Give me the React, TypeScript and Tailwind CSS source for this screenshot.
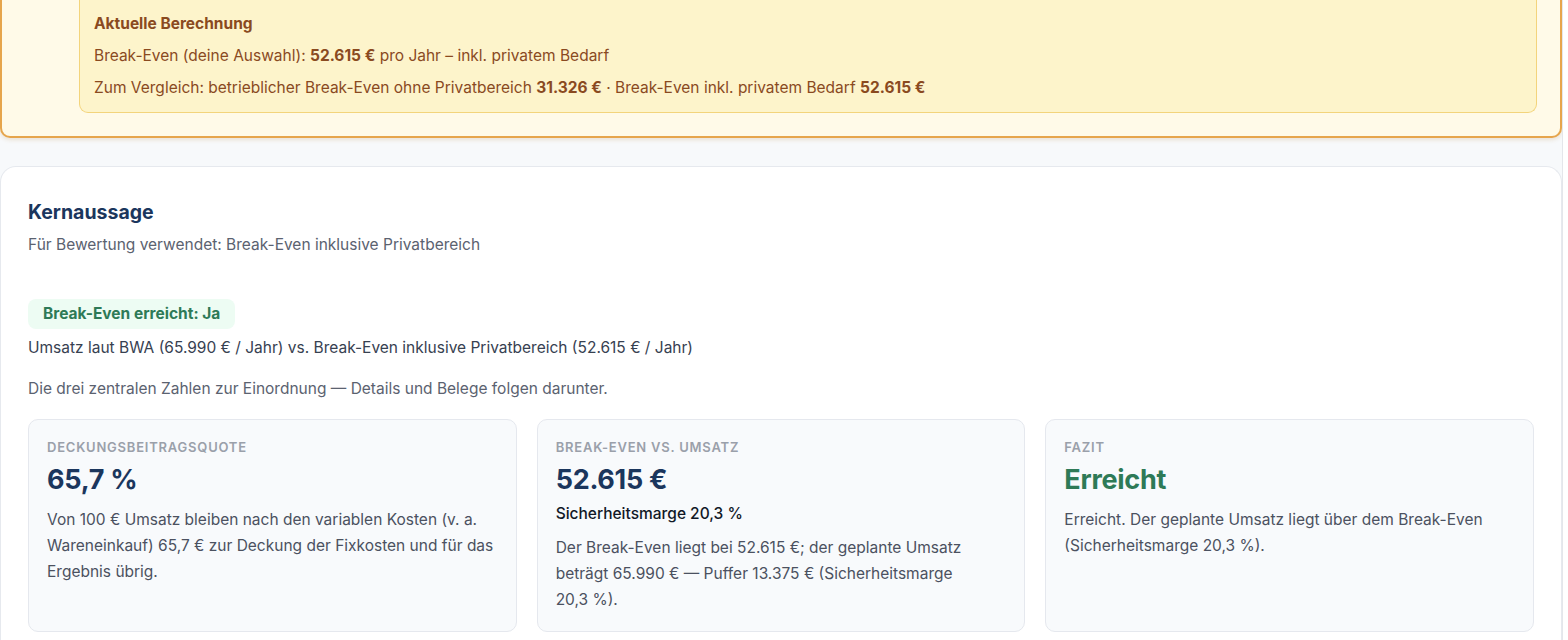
import React from "react";

const font = { fontFamily: "Inter, 'Noto Sans', sans-serif" };

type Kpi = {
  label: string;
  value: string;
  valueClass: string;
  sub?: string;
  text: string;
};

const kpis: Kpi[] = [
  {
    label: "Deckungsbeitragsquote",
    value: "65,7\u00a0%",
    valueClass: "text-[#1b365d]",
    text: "Von 100\u00a0€ Umsatz bleiben nach den variablen Kosten (v. a. Wareneinkauf) 65,7\u00a0€ zur Deckung der Fixkosten und für das Ergebnis übrig.",
  },
  {
    label: "Break-Even vs. Umsatz",
    value: "52.615\u00a0€",
    valueClass: "text-[#1b365d]",
    sub: "Sicherheitsmarge 20,3\u00a0%",
    text: "Der Break-Even liegt bei 52.615\u00a0€; der geplante Umsatz beträgt 65.990\u00a0€ — Puffer 13.375\u00a0€ (Sicherheitsmarge 20,3\u00a0%).",
  },
  {
    label: "Fazit",
    value: "Erreicht",
    valueClass: "text-[#2e7a57]",
    text: "Erreicht. Der geplante Umsatz liegt über dem Break-Even (Sicherheitsmarge 20,3\u00a0%).",
  },
];

function KpiCard({ k }: { k: Kpi }) {
  return (
    <div className="rounded-[10px] border border-[#e5e8ee] bg-[#f8fafc] px-[18px] pt-[19px] pb-[18px]">
      <div className="text-[13px] leading-[16px] font-semibold uppercase tracking-[0.06em] text-[#9aa0aa]">
        {k.label}
      </div>
      <div className={`mt-[8px] text-[27px] leading-[34px] font-bold tracking-[-0.01em] ${k.valueClass}`}>
        {k.value}
      </div>
      {k.sub && (
        <div className="mt-[6px] text-[15.5px] leading-[22px] font-medium text-[#111827]">{k.sub}</div>
      )}
      <p className="mt-[10px] pr-[4px] text-[15.5px] leading-[26px] text-[#4b5160]">{k.text}</p>
    </div>
  );
}

export default function App() {
  return (
    <div className="flex h-[640px] w-[1568px] overflow-hidden bg-[#f7f9fb]" style={font}>
      <div className="flex-1 min-w-0">
        {/* current calculation notice */}
        <div className="-mt-[15px] rounded-b-[10px] border-2 border-t-0 border-[#e6a54c] bg-[#fffae8] pl-[77px] pr-[23px] pb-[23px] shadow-[0_2px_4px_rgba(180,120,40,0.18)]">
          <div className="rounded-b-[9px] border border-t-0 border-[#f3d47c] bg-[#fdf4cb] px-[14px] pt-[28px] pb-[13px] text-[15.5px] leading-[22px] text-[#8a4a1f]">
            <div className="font-bold">Aktuelle Berechnung</div>
            <div className="mt-[10px]">
              Break-Even (deine Auswahl): <b>52.615&nbsp;€</b> pro Jahr – inkl. privatem Bedarf
            </div>
            <div className="mt-[10px]">
              Zum Vergleich: betrieblicher Break-Even ohne Privatbereich <b>31.326&nbsp;€</b> · Break-Even inkl. privatem Bedarf <b>52.615&nbsp;€</b>
            </div>
          </div>
        </div>

        {/* key statement */}
        <div className="mt-[28px] rounded-t-[16px] border border-b-0 border-[#e6e9ee] bg-white px-[27px] pt-[31px] pb-[40px]">
          <h2 className="text-[19.5px] leading-[28px] font-bold text-[#1b365d]">Kernaussage</h2>
          <p className="mt-[8px] text-[15.5px] leading-[22px] text-[#5b6270]">
            Für Bewertung verwendet: Break-Even inklusive Privatbereich
          </p>
          <div className="mt-[43px] inline-flex h-[30px] items-center rounded-[8px] bg-[#edfcf3] px-[15px] text-[15.5px] font-bold text-[#2e7a57]">
            Break-Even erreicht: Ja
          </div>
          <p className="mt-[8px] text-[15.5px] leading-[22px] text-[#374151]">
            Umsatz laut BWA (65.990&nbsp;€ / Jahr) vs. Break-Even inklusive Privatbereich (52.615&nbsp;€ / Jahr)
          </p>
          <p className="mt-[19px] text-[15.5px] leading-[22px] text-[#5b6270]">
            Die drei zentralen Zahlen zur Einordnung — Details und Belege folgen darunter.
          </p>
          <div className="mt-[19px] grid grid-cols-3 gap-[20px]">
            {kpis.map((k) => (
              <KpiCard key={k.label} k={k} />
            ))}
          </div>
        </div>
      </div>
      {/* scrollbar lane */}
      <div className="w-[6px] shrink-0 border-l border-[#e4e6ea] bg-white" />
    </div>
  );
}
